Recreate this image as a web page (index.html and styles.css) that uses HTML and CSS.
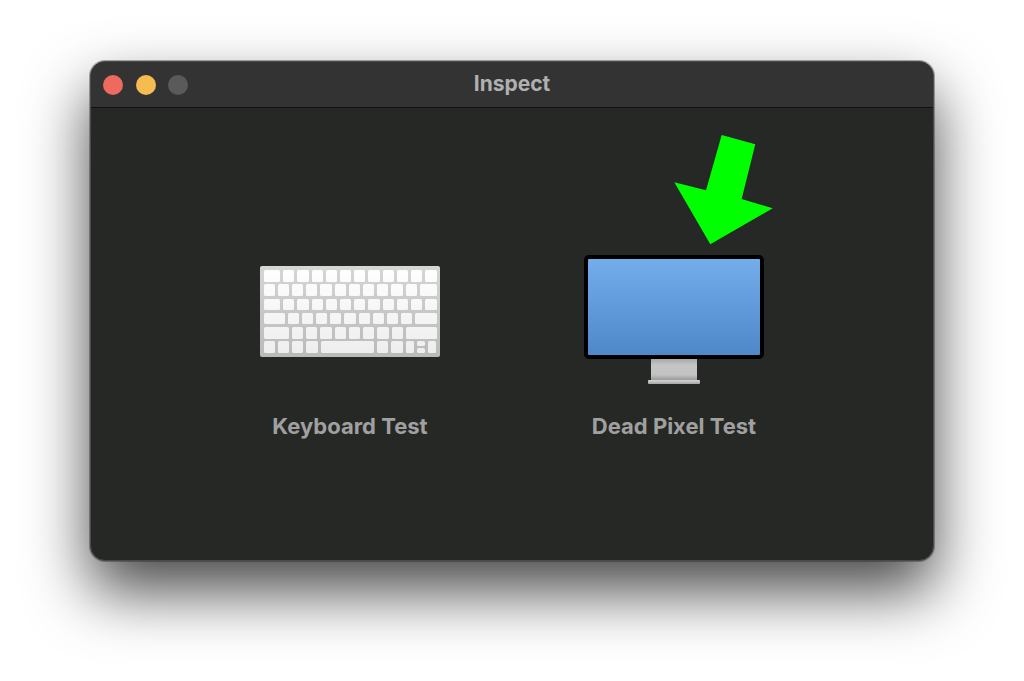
FILE: index.html
```html
<!DOCTYPE html>
<html lang="en">
<head>
<meta charset="utf-8">
<title>Inspect</title>
<link rel="stylesheet" href="styles.css">
</head>
<body>
<main class="window">
  <header class="titlebar">
    <div class="lights">
      <span class="light light-close"></span>
      <span class="light light-min"></span>
      <span class="light light-max"></span>
    </div>
    <h1 class="title">Inspect</h1>
  </header>
  <section class="content">
    <div class="option">
      <div class="icon-box">
        <div class="keyboard">
          <div class="kb-row"><i class="key w167"></i><i class="key"></i><i class="key"></i><i class="key"></i><i class="key"></i><i class="key"></i><i class="key"></i><i class="key"></i><i class="key"></i><i class="key"></i><i class="key"></i><i class="key"></i></div>
          <div class="kb-row"><i class="key"></i><i class="key"></i><i class="key"></i><i class="key"></i><i class="key"></i><i class="key"></i><i class="key"></i><i class="key"></i><i class="key"></i><i class="key"></i><i class="key"></i><i class="key w167"></i></div>
          <div class="kb-row"><i class="key w167"></i><i class="key"></i><i class="key"></i><i class="key"></i><i class="key"></i><i class="key"></i><i class="key"></i><i class="key"></i><i class="key"></i><i class="key"></i><i class="key"></i><i class="key"></i></div>
          <div class="kb-row"><i class="key w213"></i><i class="key"></i><i class="key"></i><i class="key"></i><i class="key"></i><i class="key"></i><i class="key"></i><i class="key"></i><i class="key"></i><i class="key"></i><i class="key w213"></i></div>
          <div class="kb-row"><i class="key w257"></i><i class="key"></i><i class="key"></i><i class="key"></i><i class="key"></i><i class="key"></i><i class="key"></i><i class="key"></i><i class="key"></i><i class="key w310"></i></div>
          <div class="kb-row"><i class="key"></i><i class="key"></i><i class="key"></i><i class="key"></i><i class="key w537"></i><i class="key"></i><i class="key"></i><i class="key w83"></i><span class="arrows"><i class="key-half"></i><i class="key-half"></i></span><i class="key w83"></i></div>
        </div>
      </div>
      <p class="label">Keyboard Test</p>
    </div>
    <div class="option">
      <div class="icon-box">
        <div class="monitor">
          <div class="screen"></div>
          <div class="neck"></div>
          <div class="foot"></div>
        </div>
        <svg class="pointer" viewBox="0 0 100 110" width="100" height="110" aria-hidden="true">
          <polygon points="47.7,0 81.3,9.3 67.7,64 98.7,73.3 36.3,109.3 0.3,47.3 32,55.3"/>
        </svg>
      </div>
      <p class="label">Dead Pixel Test</p>
    </div>
  </section>
</main>
</body>
</html>
```
FILE: styles.css
```css
* { box-sizing: border-box; }
html, body { margin: 0; height: 100%; }
body {
  background: #fff;
  padding: 61px 90px 0;
  overflow: hidden;
  font-family: "Inter", "Liberation Sans", sans-serif;
}
.window {
  height: 500px;
  border-radius: 15px;
  background: #262825;
  border: 1px solid #4a4a4a;
  box-shadow: 0 0 0 1px rgba(30,30,30,.35), 0 30px 62px rgba(0,0,0,.72);
  display: flex;
  flex-direction: column;
  overflow: hidden;
}
.titlebar {
  position: relative;
  height: 46px;
  flex: none;
  background: #333333;
  border-bottom: 1px solid #111;
  display: flex;
  align-items: center;
  justify-content: center;
}
.lights {
  position: absolute;
  left: 12px;
  top: 13px;
  display: flex;
  gap: 12.5px;
}
.light { width: 20px; height: 20px; border-radius: 50%; }
.light-close { background: #ee6a5f; }
.light-min { background: #f5bd4f; }
.light-max { background: #5a5a5a; }
.title {
  margin: -2px 0 0;
  font-size: 21px;
  font-weight: 700;
  color: #b0b0b0;
}
.content {
  flex: 1;
  display: flex;
  justify-content: center;
  gap: 144px;
  padding-top: 147px;
}
.option {
  width: 180px;
  display: flex;
  flex-direction: column;
  align-items: center;
}
.icon-box {
  position: relative;
  width: 100%;
  height: 129px;
}
.keyboard {
  position: relative;
  margin-top: 11px;
  height: 91px;
  padding: 4px 3.5px;
  border-radius: 2px;
  background: linear-gradient(#d6d6d6, #c8c8c8);
  display: flex;
  flex-direction: column;
  gap: 2.8px;
}
.keyboard::after {
  content: "";
  position: absolute;
  inset: 0;
  border-radius: 2px;
  background: linear-gradient(rgba(0,0,0,0), rgba(0,0,0,.07));
}
.kb-row { flex: 1; display: flex; gap: 3px; }
.key, .key-half { display: block; background: #fff; border-radius: 1.5px; }
.key { flex: 11.3 1 0; }
.w83 { flex-grow: 8.3; }
.w167 { flex-grow: 16.8; }
.w213 { flex-grow: 21.3; }
.w257 { flex-grow: 25.7; }
.w310 { flex-grow: 31; }
.w537 { flex-grow: 53.7; }
.arrows {
  flex: 8.3 1 0;
  display: flex;
  flex-direction: column;
  gap: 2px;
}
.key-half { flex: 1; }
.monitor {
  height: 129px;
  display: flex;
  flex-direction: column;
  align-items: center;
}
.screen {
  width: 100%;
  height: 104px;
  flex: none;
  border: 4px solid #000;
  border-radius: 5px;
  background: linear-gradient(#73adec, #4f88c9);
}
.neck {
  width: 46px;
  height: 21px;
  flex: none;
  background: linear-gradient(#a8a8a8, #c6c6c6 30%, #c2c2c2 75%, #9a9a9a);
}
.foot {
  width: 52px;
  height: 4px;
  flex: none;
  border-radius: 1px;
  background: linear-gradient(#d6d6d6, #a6a6a6);
}
.pointer {
  position: absolute;
  left: 90px;
  top: -120px;
}
.pointer polygon { fill: #00ff00; }
.label {
  margin: 29px 0 0;
  font-size: 22px;
  line-height: 26px;
  font-weight: 700;
  color: #a0a0a0;
  white-space: nowrap;
}
```
